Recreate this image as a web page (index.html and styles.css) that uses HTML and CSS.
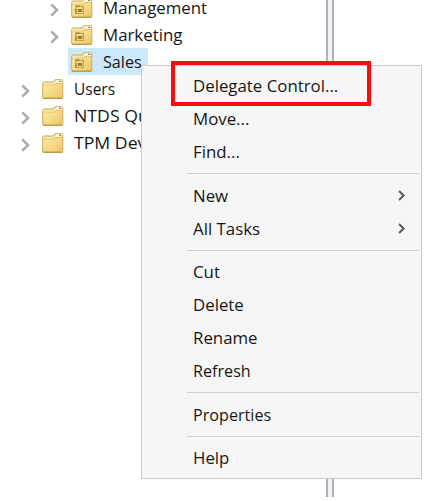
FILE: index.html
```html
<!DOCTYPE html>
<html lang="en">
<head>
<meta charset="utf-8">
<title>Directory tree</title>
<link rel="stylesheet" href="styles.css">
</head>
<body>
<svg width="0" height="0" class="defs" aria-hidden="true">
  <defs>
    <linearGradient id="gold" x1="0" y1="0" x2="1" y2="1">
      <stop offset="0" stop-color="#fff0ae"/><stop offset="1" stop-color="#edc765"/>
    </linearGradient>
    <symbol id="folder" viewBox="0 0 22 20">
      <path d="M.7 4.5Q.7 3 2 3h9l2-2.3h6.5q1.3 0 1.3 1.3v16.3q0 1-1 1H1.7q-1 0-1-1z" fill="url(#gold)" stroke="#cfaa5a"/>
      <path d="M1.5 5.2h10L13 3.7h7" fill="none" stroke="#fff6cf"/>
      <path d="M1 6h11l1.4-1.5H20" fill="none" stroke="#d9b768" stroke-width=".7"/>
      <path d="M14 2.2h5.5" stroke="#fff" stroke-width="1.7"/>
      <path d="M17 2.4h2" stroke="#78909a" stroke-width="1.2"/>
      <path d="M1 19.2h19.5" stroke="#b68b40"/>
    </symbol>
    <symbol id="unit" viewBox="0 0 22 20">
      <use href="#folder" width="22" height="20"/>
      <path d="M4.8 8.3h7.6v7.2H4.8z" fill="#f3d981" stroke="#c4a24c" stroke-width="1.2"/>
      <path d="M4.2 8.2h4.5M5 11v4.5" fill="none" stroke="#a38332" stroke-width="1.2"/>
      <path d="M6.8 11h4.4v3H6.8z" fill="#9c802f"/>
    </symbol>
    <symbol id="chevron" viewBox="0 0 10 14"><path d="M1.3 1.4 7 7l-5.7 5.6" fill="none" stroke="currentColor" stroke-width="2.6"/></symbol>
  </defs>
</svg>
<main class="window">
  <nav class="tree">
    <div class="row child"><svg class="twisty"><use href="#chevron"/></svg><svg class="icon"><use href="#unit"/></svg><span class="name">Management</span></div>
    <div class="row child"><svg class="twisty"><use href="#chevron"/></svg><svg class="icon"><use href="#unit"/></svg><span class="name">Marketing</span></div>
    <div class="row child"><span class="twisty"></span><span class="selected"><svg class="icon"><use href="#unit"/></svg><span class="name snug">Sales</span></span></div>
    <div class="row"><svg class="twisty"><use href="#chevron"/></svg><svg class="icon"><use href="#folder"/></svg><span class="name narrow">Users</span></div>
    <div class="row"><svg class="twisty"><use href="#chevron"/></svg><svg class="icon"><use href="#folder"/></svg><span class="name wide">NTDS Quotas</span></div>
    <div class="row"><svg class="twisty"><use href="#chevron"/></svg><svg class="icon"><use href="#folder"/></svg><span class="name wide">TPM Devices</span></div>
  </nav>
  <div class="splitter"></div>
</main>
<div class="menu">
  <div class="item"><span>Delegate Control...</span></div>
  <div class="item"><span>Move...</span></div>
  <div class="item"><span>Find...</span></div>
  <hr>
  <div class="item"><span>New</span><svg class="arrow"><use href="#chevron"/></svg></div>
  <div class="item"><span>All Tasks</span><svg class="arrow"><use href="#chevron"/></svg></div>
  <hr>
  <div class="item"><span>Cut</span></div>
  <div class="item"><span>Delete</span></div>
  <div class="item"><span>Rename</span></div>
  <div class="item"><span class="snug">Refresh</span></div>
  <hr>
  <div class="item"><span class="snug">Properties</span></div>
  <hr>
  <div class="item"><span>Help</span></div>
</div>
<div class="callout"></div>
</body>
</html>
```
FILE: styles.css
```css
* { box-sizing: border-box; }
body { margin: 0; height: 501px; background: #fff; color: #161616; font: 17px/16px "Open Sans", "Noto Sans", sans-serif; }
.defs { position: absolute; }
.window { display: flex; height: 497px; }
.tree { width: 326px; margin-top: -6px; }
.row { display: flex; align-items: center; height: 27px; padding-left: 21px; white-space: nowrap; }
.child { padding-left: 50px; }
.twisty { width: 10px; height: 14px; margin: 4px 11px 0 0; color: #adadad; flex: none; }
.icon { width: 22px; height: 20px; margin-right: 10px; flex: none; }
.name, .item span { display: inline-block; transform: scaleX(var(--stretch, .99)); transform-origin: left; }
.snug { --stretch: .95; }
.narrow { --stretch: .91; }
.wide { --stretch: 1.04; }
.selected { display: flex; align-items: center; width: 80px; height: 27px; margin-left: -3px; padding-left: 3px; background: #cce8fb; }
.splitter { width: 8px; background: #f3f3f5; border: solid #b0b0bb; border-width: 0 2px; }
.menu { position: absolute; left: 141px; top: 65px; width: 281px; height: 414px; padding: 3.5px 0; background: #f6f6f6; border: 1px solid #cbcbcb; }
.item { display: flex; justify-content: space-between; align-items: center; height: 33px; padding: 0 15px 0 51px; }
.arrow { width: 8px; height: 11px; margin-top: -1px; color: #5b5b5b; }
hr { height: 1px; margin: 4.75px 2px 4.75px 45px; border: 0; background: #d2d2d2; }
.callout { position: absolute; left: 171px; top: 61px; width: 200px; height: 45px; border: 4px solid #fb0d0d; }
```
